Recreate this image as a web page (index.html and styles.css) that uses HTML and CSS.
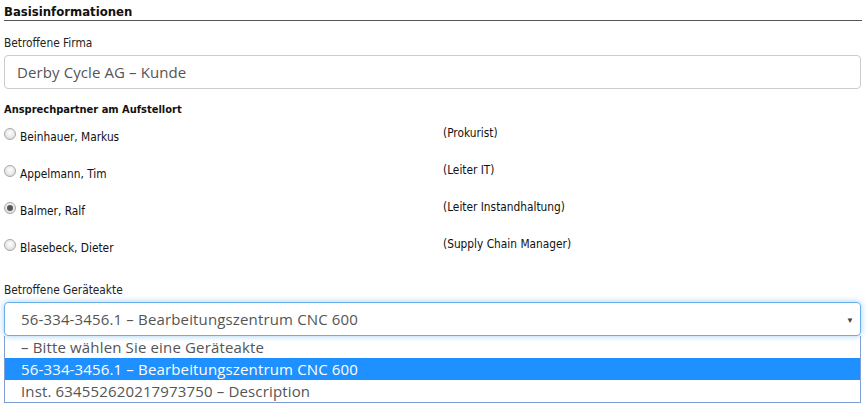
FILE: index.html
```html
<!DOCTYPE html>
<html lang="de">
<head>
<meta charset="utf-8">
<title>Basisinformationen</title>
<link rel="stylesheet" href="styles.css">
</head>
<body>
<div class="page">
  <h3 class="section-title">Basisinformationen</h3>

  <div class="field">
    <label class="field-label">Betroffene Firma</label>
    <div class="text-input">Derby Cycle AG – Kunde</div>
  </div>

  <div class="contacts">
    <div class="contacts-title">Ansprechpartner am Aufstellort</div>
    <div class="contact-grid">
      <div class="contact-name"><span class="radio"></span>Beinhauer, Markus</div>
      <div class="contact-role">(Prokurist)</div>
      <div class="contact-name"><span class="radio"></span>Appelmann, Tim</div>
      <div class="contact-role">(Leiter IT)</div>
      <div class="contact-name"><span class="radio checked"></span>Balmer, Ralf</div>
      <div class="contact-role">(Leiter Instandhaltung)</div>
      <div class="contact-name"><span class="radio"></span>Blasebeck, Dieter</div>
      <div class="contact-role">(Supply Chain Manager)</div>
    </div>
  </div>

  <div class="field device">
    <label class="field-label">Betroffene Geräteakte</label>
    <div class="select-wrap">
      <div class="select-box">
        <span>56-334-3456.1 – Bearbeitungszentrum CNC 600</span>
        <span class="arrow">▼</span>
      </div>
      <ul class="options">
        <li>– Bitte wählen Sie eine Geräteakte</li>
        <li class="active">56-334-3456.1 – Bearbeitungszentrum CNC 600</li>
        <li>Inst. 634552620217973750 – Description</li>
      </ul>
    </div>
  </div>
</div>
</body>
</html>
```

FILE: styles.css
```css
* { box-sizing: border-box; }
html, body { margin: 0; padding: 0; background: #fff; }
body {
  font-family: "DejaVu Sans Condensed", "DejaVu Sans", sans-serif;
  color: #111;
}
.page {
  width: 867px;
  padding: 4px 6px 0 4px;
}
.section-title {
  margin: 0;
  font-size: 13px;
  font-weight: bold;
  line-height: 15px;
  padding-bottom: 1px;
  border-bottom: 1px solid #555;
  margin-right: -1px;
}
.field-label {
  display: block;
  font-size: 11.8px;
  line-height: 14px;
  color: #222;
}
.field { margin-top: 15px; }
.text-input {
  margin-top: 5px;
  height: 34px;
  border: 1px solid #ccc;
  border-radius: 4px;
  padding: 0 12px;
  font-family: "Open Sans", sans-serif;
  font-size: 15px;
  letter-spacing: 0.1px;
  line-height: 32px;
  color: #555;
}
.contacts { margin-top: 14px; }
.contacts-title {
  font-size: 11px;
  font-weight: bold;
  line-height: 14px;
}
.contact-grid {
  display: grid;
  grid-template-columns: 439px 1fr;
  grid-auto-rows: 37px;
  margin-top: 5px;
}
.contact-name {
  display: flex;
  align-items: flex-start;
  gap: 4px;
  font-size: 11.8px;
  line-height: 14px;
  padding-top: 8px;
  align-self: start;
}
.contact-role {
  font-size: 11.8px;
  line-height: 14px;
  padding-top: 4px;
}
.radio {
  width: 12px;
  height: 12px;
  margin-top: -2px;
  border-radius: 50%;
  border: 1px solid #a8a8a8;
  background: radial-gradient(circle at 50% 40%, #fff 0%, #e6e6e6 60%, #cfcfcf 100%);
  display: inline-flex;
  align-items: center;
  justify-content: center;
  flex: none;
}
.radio.checked::after {
  content: "";
  width: 6px;
  height: 6px;
  border-radius: 50%;
  background: #555;
}
.device { margin-top: 13px; }
.select-wrap { margin-top: 5px; }
.select-box {
  height: 34px;
  border: 1px solid #66afe9;
  border-radius: 4px;
  box-shadow: 0 0 6px rgba(102,175,233,0.6);
  display: flex;
  align-items: center;
  justify-content: space-between;
  padding: 0 6px 0 16px;
  font-family: "Open Sans", sans-serif;
  font-size: 15px;
  letter-spacing: 0.15px;
  color: #555;
}
.arrow {
  font-size: 8px;
  color: #444;
}
.options {
  list-style: none;
  margin: 0;
  padding: 0;
  border: 1px solid #7f9ed6;
  border-top: none;
  font-family: "Open Sans", sans-serif;
  font-size: 15px;
  letter-spacing: 0.15px;
  color: #555;
}
.options li {
  height: 22px;
  line-height: 22px;
  padding-left: 16px;
}
.options li.active {
  background: #1e90ff;
  color: #fff;
}
```
